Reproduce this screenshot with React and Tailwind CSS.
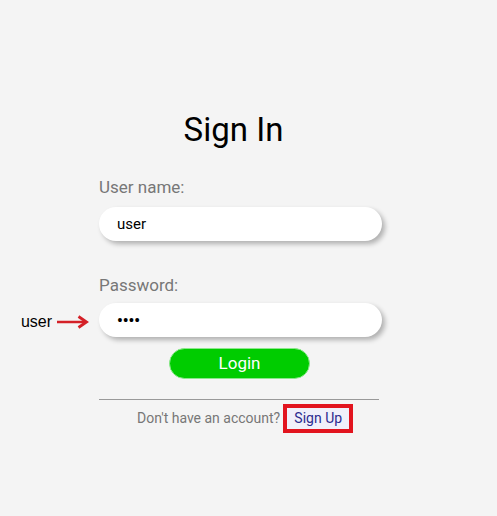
import React from "react";

const SignIn = () => {
  return (
    <div className="min-h-[516px] w-full bg-[#f4f4f4] font-['Roboto',sans-serif]">
      <div className="ml-[99px] flex w-[283px] flex-col pt-[110px]">
        {/* Title */}
        <h1 className="pr-[14px] text-center text-[33px] leading-[40px] text-black">
          Sign In
        </h1>

        {/* User name */}
        <label className="mt-[27px] text-[17px] leading-[20px] text-[#777]">
          User name:
        </label>
        <input
          readOnly
          value="user"
          className="mt-[10px] h-[34px] w-full rounded-full bg-white pl-[18px] text-[15px] text-black shadow-[3px_3px_5px_rgba(0,0,0,0.28)] outline-none"
        />

        {/* Password */}
        <label className="mt-[34px] text-[17px] leading-[20px] text-[#777]">
          Password:
        </label>
        <div className="relative mt-[8px]">
          {/* annotation */}
          <div className="absolute right-full top-0 mr-[10px] flex h-[34px] items-center gap-[5px] pt-[3px] font-['Liberation_Sans',sans-serif] text-[16px] text-black">
            <span>user</span>
            <svg width="32" height="14" viewBox="0 0 32 14">
              <path d="M0 7 H29" stroke="#d42027" strokeWidth="2.5" />
              <path d="M21.5 1.5 L29.5 7 L21.5 12.5" fill="none" stroke="#d42027" strokeWidth="2.8" />
            </svg>
          </div>
          <input
            readOnly
            type="password"
            value="user"
            className="h-[34px] w-full rounded-full bg-white pl-[18px] text-[16px] font-bold text-black shadow-[3px_3px_5px_rgba(0,0,0,0.28)] outline-none"
          />
        </div>

        {/* Login */}
        <button className="mt-[11px] ml-[70px] h-[31px] w-[141px] rounded-full border border-[#8be88b] bg-[#00cc00] text-[17px] text-white">
          Login
        </button>

        {/* Divider */}
        <hr className="mt-[20px] w-[280px] border-t border-[#999]" />

        {/* Sign up row */}
        <div className="mt-[4px] flex items-center pl-[38px]">
          <span className="text-[14px] text-[#777]">Don't have an account?</span>
          <a className="ml-[3px] flex h-[29px] w-[70px] items-center justify-center border-[4px] border-[#e2141e] bg-[#f0f0fa] text-[14px] text-[#2b2b8f]">
            Sign Up
          </a>
        </div>
      </div>
    </div>
  );
};

export default function App() {
  return <SignIn />;
}
